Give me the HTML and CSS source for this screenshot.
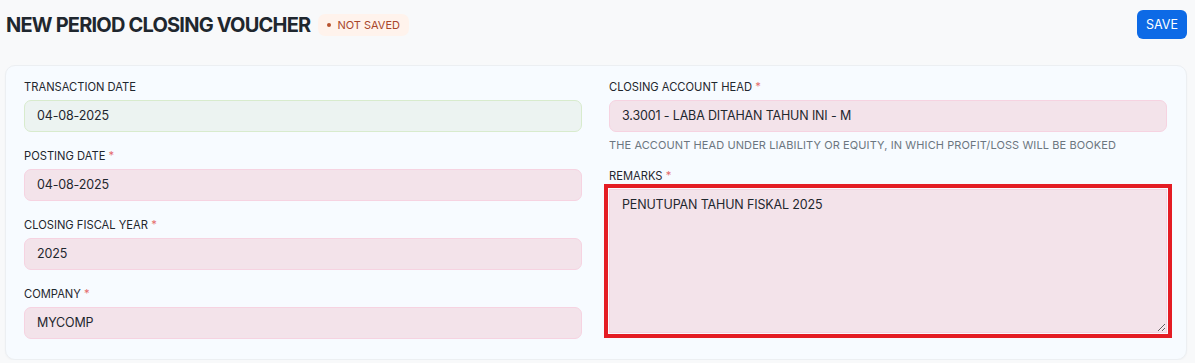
FILE: index.html
```html
<!DOCTYPE html>
<html lang="en">
<head>
    <meta charset="UTF-8">
    <meta name="viewport" content="width=device-width, initial-scale=1.0">
    <title>New Period Closing Voucher</title>
    <link rel="stylesheet" href="styles.css">
</head>
<body>
    <div class="page-head">
        <div class="title-area">
            <h1 class="page-title">New Period Closing Voucher</h1>
            <span class="indicator"><span class="dot"></span>Not Saved</span>
        </div>
        <button class="btn-save">Save</button>
    </div>

    <div class="form-card">
        <!-- left column -->
        <div class="form-column">
            <div class="form-field">
                <label class="field-label">Transaction Date</label>
                <div class="field-input valid">04-08-2025</div>
            </div>
            <div class="form-field">
                <label class="field-label">Posting Date <span class="reqd">*</span></label>
                <div class="field-input">04-08-2025</div>
            </div>
            <div class="form-field">
                <label class="field-label">Closing Fiscal Year <span class="reqd">*</span></label>
                <div class="field-input">2025</div>
            </div>
            <div class="form-field">
                <label class="field-label">Company <span class="reqd">*</span></label>
                <div class="field-input">MYCOMP</div>
            </div>
        </div>

        <!-- right column -->
        <div class="form-column">
            <div class="form-field">
                <label class="field-label">Closing Account Head <span class="reqd">*</span></label>
                <div class="field-input">3.3001 - Laba Ditahan Tahun Ini - M</div>
                <p class="field-help">The account head under Liability or Equity, in which Profit/Loss will be booked</p>
            </div>
            <div class="form-field">
                <label class="field-label">Remarks <span class="reqd">*</span></label>
                <textarea class="field-input field-text highlight">PENUTUPAN TAHUN FISKAL 2025</textarea>
            </div>
        </div>
    </div>
</body>
</html>
```

FILE: styles.css
```css
body {
    font-family: Inter, "Liberation Sans", sans-serif;
    margin: 0;
    background-color: #f8f9fa;
    color: #1f272e;
    text-transform: uppercase;
}
.page-head {
    display: flex;
    justify-content: space-between;
    align-items: flex-start;
    padding: 10px 8px 0 6px;
    height: 55px;
}
.title-area {
    display: flex;
    align-items: center;
    gap: 8px;
    margin-top: 3px;
}
.page-title {
    margin: 0;
    font-size: 20px;
    font-weight: 700;
    letter-spacing: -0.8px;
    line-height: 24px;
}
.indicator {
    display: inline-flex;
    align-items: center;
    gap: 6px;
    height: 22px;
    padding: 0 9px;
    background: #fff3ec;
    color: #a8462b;
    font-size: 11px;
    border-radius: 7px;
}
.indicator .dot {
    width: 4px;
    height: 4px;
    border-radius: 50%;
    background: #b8532f;
}
.btn-save {
    font-family: inherit;
    text-transform: uppercase;
    background: #0d6ae6;
    color: white;
    border: none;
    border-radius: 6px;
    font-size: 12.5px;
    font-weight: 400;
    height: 29px;
    padding: 0 9px;
}
.form-card {
    display: grid;
    grid-template-columns: 1fr 1fr;
    column-gap: 27px;
    margin: 0 8px 0 5px;
    padding: 13px 19px 20px 18px;
    background: #f7fbff;
    border: 1px solid #eceff2;
    border-radius: 10px;
    box-shadow: 0 1px 2px rgba(0, 0, 0, 0.03);
}
.form-field {
    margin-bottom: 16px;
}
.form-column .form-field:last-child {
    margin-bottom: 0;
}
.field-label {
    display: block;
    font-size: 11.2px;
    line-height: 16px;
    margin-bottom: 5px;
}
.reqd {
    color: #e56b6b;
}
.field-input {
    box-sizing: border-box;
    display: block;
    width: 100%;
    height: 32px;
    padding: 0 12px;
    line-height: 30px;
    font-size: 12.5px;
    letter-spacing: -0.15px;
    font-weight: 400;
    color: #1f272e;
    background: #f3e3ea;
    border: 1px solid #f6d3e1;
    border-radius: 7px;
}
.field-input.valid {
    background: #ecf3f1;
    border-color: #d8ebcd;
}
.field-help {
    margin: 6px 0 0;
    font-size: 11px;
    line-height: 14px;
    color: #6c7680;
    letter-spacing: 0.1px;
}
.field-text {
    font-family: inherit;
    text-transform: uppercase;
    height: 144px;
    padding: 7px 12px;
    line-height: 16px;
    resize: vertical;
    border-radius: 0;
}
.highlight {
    outline: 4px solid #e41c24;
    outline-offset: 1px;
}
```
